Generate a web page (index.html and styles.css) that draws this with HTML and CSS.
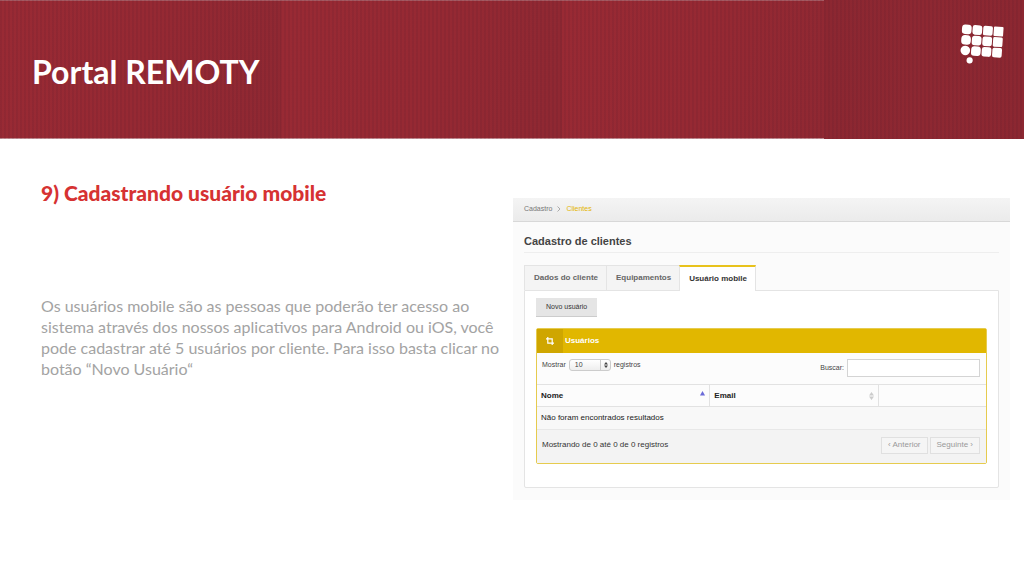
FILE: index.html
```html
<!DOCTYPE html>
<html lang="pt-BR">
    <head>
        <meta charset="utf-8">
        <title>Portal REMOTY</title>
        <link rel="stylesheet" href="styles.css">
    </head>
    <body>
        <header class="banner">
            <h1>Portal REMOTY</h1>
            <svg class="logo" viewBox="0 0 44 42" width="44" height="42" fill="#fff" aria-hidden="true">
                <g transform="rotate(4 22 20)">
                    <rect x="1" y="1.6" width="9.6" height="9.6" rx="3.2"/>
                    <rect x="11.6" y="1.6" width="9.6" height="9.6" rx="2.4"/>
                    <rect x="22.2" y="1.6" width="9.6" height="9.6" rx="1.8"/>
                    <rect x="32.8" y="1.6" width="9.6" height="9.6" rx="1"/>
                    <rect x="1" y="12.2" width="9.6" height="9.6" rx="3.8"/>
                    <rect x="11.6" y="12.2" width="9.6" height="9.6" rx="2.9"/>
                    <rect x="22.2" y="12.2" width="9.6" height="9.6" rx="2.2"/>
                    <rect x="32.8" y="12.2" width="9.6" height="9.6" rx="1.4"/>
                    <rect x="1" y="22.8" width="9.6" height="9.6" rx="4.8"/>
                    <rect x="11.6" y="22.8" width="9.6" height="9.6" rx="3.2"/>
                    <rect x="22.2" y="22.8" width="9.6" height="9.6" rx="2.6"/>
                    <rect x="32.8" y="22.8" width="9.6" height="9.6" rx="1.8"/>
                    <circle cx="10.8" cy="37.2" r="3.1"/>
                </g>
            </svg>
        </header>

        <main class="content">
            <section class="info">
                <h2>9) Cadastrando usuário mobile</h2>
                <p>Os usuários mobile são as pessoas que poderão ter acesso ao<br>
                sistema através dos nossos aplicativos para Android ou iOS, você<br>
                pode cadastrar até 5 usuários por cliente. Para isso basta clicar no<br>
                botão “Novo Usuário“</p>
            </section>

            <section class="app">
                <nav class="breadcrumb">
                    <a href="#">Cadastro</a>
                    <svg viewBox="0 0 4 6" width="4" height="6" fill="none" stroke="#aaa"><path d="M0.5 0.5L3 3L0.5 5.5"/></svg>
                    <a href="#" class="current">Clientes</a>
                </nav>
                <div class="page">
                    <h3>Cadastro de clientes</h3>
                    <div class="tabs">
                        <button type="button">Dados do cliente</button>
                        <button type="button">Equipamentos</button>
                        <button type="button" class="active">Usuário mobile</button>
                    </div>
                    <div class="pane">
                        <button type="button" class="new">Novo usuário</button>
                        <div class="box">
                            <div class="boxTitle">
                                <span class="boxIcon">
                                    <svg viewBox="0 0 8 8" width="8" height="8" fill="none" stroke="#fff" stroke-width="1.2"><path d="M0 1.8H6.2V8M1.8 0V6.2H8"/></svg>
                                </span>
                                <h4>Usuários</h4>
                            </div>
                            <div class="filters">
                                <div class="length">
                                    <label for="length">Mostrar</label>
                                    <span class="selectWrap">
                                        <select id="length"><option>10</option><option>25</option><option>50</option></select>
                                        <svg viewBox="0 0 4 6" width="4" height="6" fill="#444"><path d="M2 0L4 2.4H0zM2 6L4 3.6H0z"/></svg>
                                    </span>
                                    <label for="length">registros</label>
                                </div>
                                <div class="search">
                                    <label for="search">Buscar:</label>
                                    <input type="text" id="search">
                                </div>
                            </div>
                            <table>
                                <thead>
                                    <tr>
                                        <th class="name"><div>Nome <svg class="asc" viewBox="0 0 5 5" width="5" height="5" fill="#6a6ad8"><path d="M2.5 0L5 4.5H0z"/></svg></div></th>
                                        <th class="email"><div>Email <svg viewBox="0 0 5 8" width="5" height="8" fill="#ccc"><path d="M2.5 0L5 3.5H0zM2.5 8L5 4.5H0z"/></svg></div></th>
                                        <th></th>
                                    </tr>
                                </thead>
                                <tbody>
                                    <tr><td colspan="3">Não foram encontrados resultados</td></tr>
                                </tbody>
                            </table>
                            <div class="boxFooter">
                                <span>Mostrando de 0 até 0 de 0 registros</span>
                                <div class="pager">
                                    <button type="button">‹ Anterior</button>
                                    <button type="button">Seguinte ›</button>
                                </div>
                            </div>
                        </div>
                    </div>
                </div>
            </section>
        </main>
    </body>
</html>
```
FILE: styles.css
```css
* {
    box-sizing: border-box;
}

body {
    margin: 0;
    background-color: white;
    font-family: Lato, sans-serif;
}

h1, h2, h3, h4, p {
    margin: 0;
}

button, input, select {
    font: inherit;
    color: inherit;
}

.banner {
    display: flex;
    justify-content: space-between;
    align-items: flex-start;
    height: 139px;
    padding: 24px 20px 0 32px;
    background-color: #90262f;
    /* fabric stripes, light seams, darker last tile, repeated tiles */
    background-image:
        repeating-linear-gradient(90deg, rgba(60, 20, 40, 0.09) 0 2px, transparent 2px 4px),
        linear-gradient(90deg, #8c2731, #8e2832 50%, #8c2731),
        linear-gradient(#a45a62, #a45a62),
        linear-gradient(#c08a90, #c08a90),
        linear-gradient(100deg, #992a34, #962933 50%, #8f2832);
    background-size: auto, 200px 100%, 100% 1px, 100% 1px, 281px 100%;
    background-position: 0 0, 100% 0, 0 0, 0 100%, 0 0;
    background-repeat: repeat, no-repeat, no-repeat, no-repeat, repeat-x;
    color: white;
}

.banner h1 {
    padding-top: 29px;
    font-size: 32px;
    line-height: 38px;
    font-weight: bold;
}

.logo {
    display: block;
}

.content {
    display: grid;
    grid-template-columns: minmax(0, 448fr) minmax(0, 497fr);
    gap: 24px;
    align-items: start;
    padding: 41px 14px 0 41px;
}

.info h2 {
    font-size: 21px;
    line-height: 26px;
    font-weight: 900;
    color: #d63232;
}

.info p {
    padding-top: 89px;
    font-size: 16px;
    line-height: 21px;
    white-space: nowrap;
    color: #a3a3a3;
}

.app {
    margin-top: 18px;
    background-color: #fbfbfb;
    font-family: "Liberation Sans", Arial, sans-serif;
    font-size: 8px;
    line-height: 10px;
    color: #444;
}

.breadcrumb {
    display: flex;
    align-items: center;
    gap: 5px;
    height: 24px;
    padding: 0 11px 1px 11px;
    border-bottom: 1px solid #d8d8d8;
    background-image: linear-gradient(#f4f4f4, #ebebeb);
    font-size: 7px;
}

.breadcrumb a {
    color: #777;
    text-decoration: none;
}

.breadcrumb .current {
    color: #e4b400;
}

.page {
    padding: 12px 11px 12px 11px;
}

.page h3 {
    padding-bottom: 4px;
    border-bottom: 1px solid #eee;
    font-size: 11px;
    line-height: 14px;
    color: #444;
}

.tabs {
    display: flex;
    margin-top: 12px;
}

.tabs button {
    height: 25px;
    padding: 0 8px 0 9px;
    border: 1px solid #e4e4e4;
    border-width: 1px 0 0 1px;
    background-color: #f4f4f4;
    font-weight: bold;
    color: #666;
}

.tabs .active {
    height: 26px;
    margin-bottom: -1px;
    border-top: 2px solid #e8c21c;
    border-right-width: 1px;
    background-color: white;
    color: #333;
}

.pane {
    padding: 7px 11px 23px 11px;
    border: 1px solid #e4e4e4;
    border-radius: 0 0 2px 2px;
    background-color: white;
}

.new {
    display: block;
    height: 19px;
    padding: 0 10px;
    border: 0;
    border-bottom: 1px solid #ccc;
    background-color: #e5e5e5;
    font-size: 7px;
    color: #333;
}

.box {
    margin-top: 11px;
    border: 1px solid #e6cb4e;
    border-radius: 2px;
    background-color: #fcfcfc;
}

.boxTitle {
    display: flex;
    align-items: center;
    height: 24px;
    background-color: #e1b700;
    color: white;
}

.boxTitle h4 {
    padding-left: 2px;
    font-size: 8px;
}

.boxIcon {
    display: flex;
    align-items: center;
    justify-content: center;
    width: 26px;
    height: 24px;
    background-color: #cfa600;
}

.filters {
    display: flex;
    justify-content: space-between;
    align-items: flex-start;
    height: 31px;
    padding: 6px 6px 0 5px;
    font-size: 7px;
}

.length, .search {
    display: flex;
    align-items: center;
    gap: 3px;
}

.selectWrap {
    display: grid;
    align-items: center;
}

.selectWrap select,
.selectWrap svg {
    grid-area: 1 / 1;
}

.selectWrap select {
    width: 42px;
    height: 12px;
    padding: 0 5px;
    border: 1px solid #ccc;
    border-radius: 3px;
    appearance: none;
    background: linear-gradient(90deg, transparent 30px, #ccc 30px 31px, transparent 31px), linear-gradient(#fff, #eee);
}

.selectWrap svg {
    justify-self: end;
    margin-right: 3px;
    pointer-events: none;
}

.search input {
    width: 133px;
    height: 18px;
    padding: 0 4px;
    border: 1px solid #d4d4d4;
    background-color: white;
}

table {
    width: 100%;
    border-collapse: collapse;
    table-layout: fixed;
    color: #222;
}

th {
    height: 22px;
    padding: 0 4px;
    border: 1px solid #e2e2e2;
    border-width: 1px 1px 1px 0;
    text-align: left;
}

th:last-child {
    border-right: 0;
}

th div {
    display: flex;
    justify-content: space-between;
    align-items: center;
}

.asc {
    align-self: flex-start;
}

.name {
    width: 38.5%;
}

.email {
    width: 37.5%;
}

td {
    height: 23px;
    padding: 0 4px;
    border-bottom: 1px solid #e8e8e8;
    background-color: #f8f8f8;
}

.boxFooter {
    display: flex;
    justify-content: space-between;
    align-items: center;
    height: 33px;
    padding: 0 6px 3px 5px;
    background-color: #f3f3f3;
    color: #333;
}

.pager {
    display: flex;
    gap: 2px;
}

.pager button {
    height: 17px;
    padding: 0 6px;
    border: 1px solid #e0e0e0;
    background-color: #f5f5f5;
    color: #999;
}
```
